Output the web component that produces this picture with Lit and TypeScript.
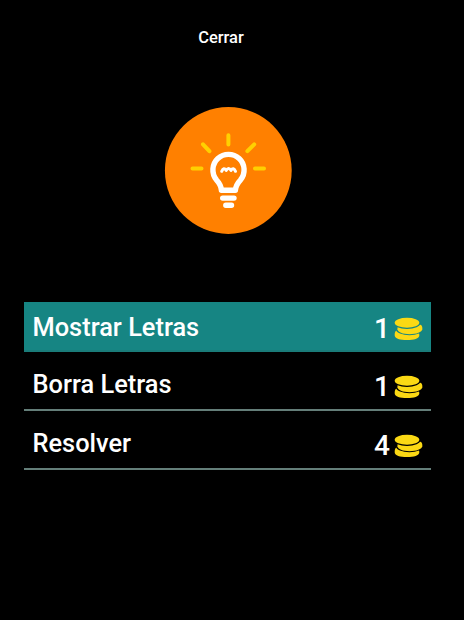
import { LitElement, html, css } from 'lit';

// stack of three coins shown next to each price
export class CoinStack extends LitElement {
  static get tag() {
    return 'coin-stack';
  }
  static get styles() {
    return css`
      :host {
        display: block;
        width: 29px;
        height: 24px;
      }

      svg {
        display: block;
      }

      .coin {
        fill: #fbd914;
      }

      .gap {
        fill: var(--row-color, #000);
      }
    `;
  }
  // bottom coin first, every coin above cuts a gap out of the one below
  render() {
    return html`
      <svg width="29" height="24" viewBox="0 0 29 24">
        <path class="coin" d="M2.400 13.600C1 14.600 .6 16.200 .7 18.400C.8 21.200 6 23.100 13 23.100S25.200 21.200 25.300 18.400C25.400 17 25 16 24.300 15Z" />
        <ellipse class="gap" cx="15.500" cy="12.400" rx="13.400" ry="5.900" />
        <path class="coin" d="M26.600 7.800C28.200 8.800 28.500 10.500 28.300 12.300C27.900 15.300 22.500 17.200 15.500 17.200C8.600 17.200 3.800 15.300 3.400 12.300L3.600 9.600Z" />
        <ellipse class="gap" cx="13" cy="6" rx="13.500" ry="5.900" />
        <ellipse class="coin" cx="13" cy="5.700" rx="12.300" ry="5" />
      </svg>
    `;
  }
}
customElements.define(CoinStack.tag, CoinStack);

// round orange hint badge with the light bulb
export class HintBulb extends LitElement {
  static get tag() {
    return 'hint-bulb';
  }
  static get styles() {
    return css`
      :host {
        display: block;
      }

      svg {
        display: block;
      }

      .disc {
        fill: #ff8000;
      }

      .rays {
        stroke: #ffd000;
        stroke-width: 4;
        stroke-linecap: round;
      }

      .bulb {
        fill: none;
        stroke: #fff;
        stroke-width: 5.4;
        stroke-linejoin: round;
      }

      .base {
        stroke: #fff;
        stroke-width: 5.4;
        stroke-linecap: round;
      }

      .filament {
        fill: none;
        stroke: #fff;
        stroke-width: 3;
        stroke-linecap: round;
        stroke-linejoin: round;
      }
    `;
  }
  render() {
    return html`
      <svg width="128" height="128" viewBox="164 107 128 128">
        <circle class="disc" cx="228.300" cy="170.500" r="63.400" />
        <path class="rays" d="M228.400 135.200V144.600M203 144.300L209.400 151.200M254.200 144.300L247.400 151.200M192.500 168.600H201.500M255 168.600H264" />
        <path class="bulb" d="M221.400 190.200C221.200 185.800 219.200 182.800 216.400 179.800A15.600 15.600 0 1 1 240.600 179.800C237.800 182.800 235.600 185.800 235.400 190.200Z" />
        <path class="filament" d="M221.700 171.300Q223.800 166.600 226.200 170.400Q228.600 166.600 231 170.400Q233.400 166.600 235.500 171.300" />
        <path class="base" d="M222.700 198.100H234M225.800 205.200H231.500" />
      </svg>
    `;
  }
}
customElements.define(HintBulb.tag, HintBulb);

// one hint the player can buy
export class HintOption extends LitElement {
  label: string;
  cost: number;

  constructor() {
    super();
    this.label = '';
    this.cost = 0;
  }
  static get tag() {
    return 'hint-option';
  }
  static get properties() {
    return {
      label: { type: String },
      cost: { type: Number },
      active: { type: Boolean, reflect: true }
    };
  }
  static get styles() {
    return css`
      :host {
        display: block;
        --row-color: #000;
      }

      :host([active]) {
        --row-color: #168583;
      }

      .row {
        display: flex;
        align-items: center;
        box-sizing: border-box;
        height: 50px;
        padding: 0 8px 2px 8.5px;
        background: var(--row-color);
        border-bottom: 2px solid #647e79;
        color: #fff;
        font-weight: 500;
      }

      :host([active]) .row {
        padding-bottom: 0;
        border-bottom-color: #1a7c79;
      }

      .label {
        flex: 1;
        font-size: 25.4px;
        line-height: 46px;
      }

      :host([active]) .label {
        padding-top: 1px;
      }

      .cost {
        margin-right: 4px;
        padding-top: 6px;
        font-size: 28px;
        line-height: 42px;
      }

      coin-stack {
        margin-top: 6px;
      }
    `;
  }
  render() {
    return html`
      <div class="row">
        <span class="label">${this.label}</span>
        <span class="cost">${this.cost}</span>
        <coin-stack></coin-stack>
      </div>
    `;
  }
}
customElements.define(HintOption.tag, HintOption);

export class AppRoot extends LitElement {
  static get tag() {
    return 'app-root';
  }
  static get styles() {
    return css`
      :host {
        display: block;
      }

      .screen {
        display: flex;
        flex-direction: column;
        align-items: center;
        box-sizing: border-box;
        width: 464px;
        height: 620px;
        padding: 28px 33px 0 24px;
        background: #000;
        font-family: Roboto, "Liberation Sans", sans-serif;
      }

      .close {
        margin: 0 13px 0 0;
        padding: 0;
        border: 0;
        background: none;
        color: #fff;
        font: inherit;
        font-size: 16.5px;
        font-weight: 500;
        line-height: 20px;
      }

      hint-bulb {
        margin: 59px 0 67px;
      }

      .options {
        display: flex;
        flex-direction: column;
        gap: 9px;
        width: 100%;
      }
    `;
  }
  render() {
    return html`
      <div class="screen">
        <button class="close">Cerrar</button>
        <hint-bulb></hint-bulb>
        <div class="options">
          <hint-option label="Mostrar Letras" cost="1" active></hint-option>
          <hint-option label="Borra Letras" cost="1"></hint-option>
          <hint-option label="Resolver" cost="4"></hint-option>
        </div>
      </div>
    `;
  }
}
customElements.define(AppRoot.tag, AppRoot);
